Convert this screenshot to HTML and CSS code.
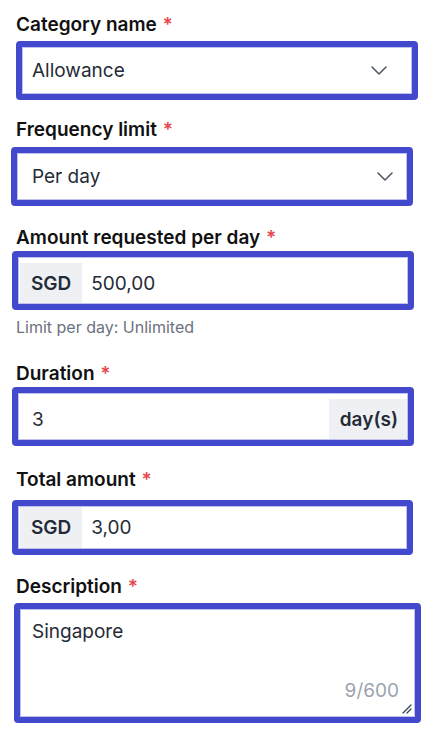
FILE: index.html
```html
<!DOCTYPE html>
<html>
  <head>
    <title>Claim item</title>
    <link rel="stylesheet" href="styles.css">
  </head>
  <body>
    <div class="form">
      <!-- Category -->
      <div class="field field-category">
        <label class="label">Category name <span class="req">*</span></label>
        <div class="ring">
          <div class="control select">
            <span class="value">Allowance</span>
            <svg class="chevron" width="16" height="9" viewBox="0 0 16 9"><path d="M1 1l7 7 7-7" fill="none" stroke="#4b5563" stroke-width="1.5" stroke-linecap="round" stroke-linejoin="round"/></svg>
          </div>
        </div>
      </div>

      <!-- Frequency -->
      <div class="field field-frequency">
        <label class="label">Frequency limit <span class="req">*</span></label>
        <div class="ring">
          <div class="control select">
            <span class="value">Per day</span>
            <svg class="chevron" width="16" height="9" viewBox="0 0 16 9"><path d="M1 1l7 7 7-7" fill="none" stroke="#4b5563" stroke-width="1.5" stroke-linecap="round" stroke-linejoin="round"/></svg>
          </div>
        </div>
      </div>

      <!-- Amount per day -->
      <div class="field field-amount">
        <label class="label">Amount requested per day <span class="req">*</span></label>
        <div class="ring">
          <div class="control group">
            <span class="addon">SGD</span>
            <span class="value">500,00</span>
          </div>
        </div>
        <div class="hint">Limit per day: Unlimited</div>
      </div>

      <!-- Duration -->
      <div class="field field-duration">
        <label class="label">Duration <span class="req">*</span></label>
        <div class="ring">
          <div class="control group">
            <span class="value value-plain">3</span>
            <span class="addon addon-right">day(s)</span>
          </div>
        </div>
      </div>

      <!-- Total -->
      <div class="field field-total">
        <label class="label">Total amount <span class="req">*</span></label>
        <div class="ring">
          <div class="control group group-short">
            <span class="addon">SGD</span>
            <span class="value">3,00</span>
          </div>
        </div>
      </div>

      <!-- Description -->
      <div class="field field-description">
        <label class="label">Description <span class="req">*</span></label>
        <div class="ring">
          <div class="control textarea">
            <span class="value">Singapore</span>
            <span class="counter">9/600</span>
            <svg class="resize" width="10" height="10" viewBox="0 0 10 10"><path d="M9 1L1 9M9 5L5 9" stroke="#374151" stroke-width="1.2" stroke-linecap="round"/></svg>
          </div>
        </div>
      </div>
    </div>
  </body>
</html>
```

FILE: styles.css
```css
/* Base */
body {
  margin: 0;
  background-color: #ffffff;
  font-family: Inter, "Noto Sans", sans-serif;
  color: #1f2937;
}

.form {
  display: flex;
  flex-direction: column;
  padding-top: 14px;
}

.label {
  display: block;
  padding-left: 16px;
  font-size: 19px;
  line-height: 22px;
  font-weight: 600;
  color: #111111;
}

.req {
  color: #e5484d;
  margin-left: 1px;
}

/* Focus ring round each control */
.ring {
  border: 6px solid #4349cc;
  border-radius: 4px;
}

.control {
  box-sizing: border-box;
  position: relative;
  display: flex;
  align-items: center;
  height: 47px;
  background-color: #ffffff;
  border: 1px solid #bfc2ee;
  font-size: 19px;
}

.value {
  color: #252b36;
}

.select {
  justify-content: space-between;
}

.chevron {
  display: block;
}

.group {
  align-items: flex-end;
  padding-top: 6px;
}

.group .addon {
  display: flex;
  align-items: center;
  height: 40px;
  padding: 0 11px;
  margin-left: 1px;
  background-color: #eef0f3;
  font-weight: 600;
  color: #252b36;
}

.group .value {
  display: flex;
  align-items: center;
  height: 40px;
  padding-left: 9px;
}

.group .value-plain {
  flex: 1;
  padding-left: 13px;
}

.group .addon-right {
  margin-left: 0;
  padding: 0 9px 0 11px;
}

.group-short {
  height: 43px;
  padding-top: 0;
  align-items: center;
}

.group-short .addon,
.group-short .value {
  height: 41px;
}

.hint {
  margin-top: 7px;
  padding-left: 16px;
  font-size: 16px;
  line-height: 20px;
  color: #6b7280;
}

.textarea {
  height: 108px;
  align-items: flex-start;
  padding: 10px 11px;
}

.counter {
  position: absolute;
  right: 15px;
  bottom: 14px;
  color: #9ca3af;
}

.resize {
  position: absolute;
  right: 2px;
  bottom: 2px;
}

/* Per-field placement */
.field-category .label { margin-bottom: 5px; }
.field-category .ring { margin: 0 19px 0 16px; }
.field-category .select { padding: 0 24px 0 9px; }

.field-frequency { margin-top: 19px; }
.field-frequency .label { margin-bottom: 6px; }
.field-frequency .ring { margin: 0 24px 0 11px; }
.field-frequency .select { padding: 0 13px 0 14px; }

.field-amount { margin-top: 21px; }
.field-amount .label { margin-bottom: 2px; }
.field-amount .ring { margin: 0 23px 0 12px; }

.field-duration { margin-top: 26px; }
.field-duration .label { margin-bottom: 2px; }
.field-duration .ring { margin: 0 23px 0 12px; }

.field-total { margin-top: 23px; }
.field-total .label { margin-bottom: 9px; }
.field-total .ring { margin: 0 24px 0 12px; }

.field-description { margin-top: 21px; }
.field-description .label { margin-bottom: 5px; }
.field-description .ring { margin: 0 16px 0 14px; }
```
